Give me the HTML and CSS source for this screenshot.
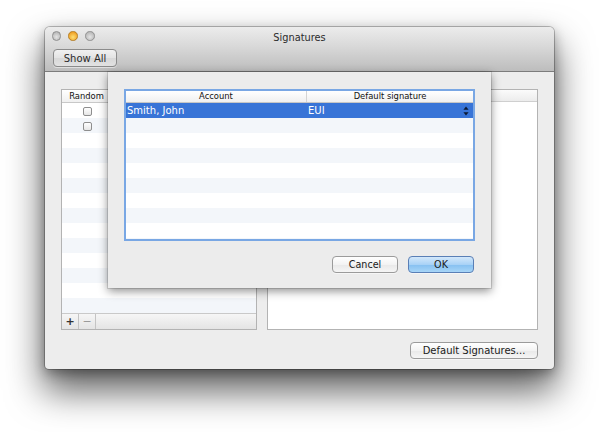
FILE: index.html
```html
<!DOCTYPE html>
<html>
<head>
<meta charset="utf-8">
<title>Signatures</title>
<link rel="stylesheet" href="styles.css">
</head>
<body>
<div class="window">
  <header class="titlebar">
    <div class="titlerow">
      <div class="lights">
        <span class="light"></span>
        <span class="light light-min"></span>
        <span class="light"></span>
      </div>
      <div class="title">Signatures</div>
      <div></div>
    </div>
    <div class="toolbar">
      <button class="btn btn-toolbar">Show All</button>
    </div>
  </header>
  <main class="content">
    <div class="panels">
      <div class="list">
        <div class="thead">
          <div class="th col-random">Random</div>
          <div class="th col-name"></div>
        </div>
        <div class="tbody">
          <div class="tr"><div class="td col-random"><span class="check"></span></div></div>
          <div class="tr"><div class="td col-random"><span class="check"></span></div></div>
          <div class="tr"></div>
          <div class="tr"></div>
          <div class="tr"></div>
          <div class="tr"></div>
          <div class="tr"></div>
          <div class="tr"></div>
          <div class="tr"></div>
          <div class="tr"></div>
          <div class="tr"></div>
          <div class="tr"></div>
          <div class="tr"></div>
          <div class="tr"></div>
        </div>
        <div class="list-bar">
          <button class="bar-btn bar-add">+</button>
          <button class="bar-btn bar-remove">−</button>
        </div>
      </div>
      <div class="editor">
        <div class="editor-head"></div>
      </div>
    </div>
    <div class="footer">
      <button class="btn btn-defaults">Default Signatures...</button>
    </div>

    <div class="sheet">
      <div class="grid">
        <div class="grid-head">
          <div class="gh gh-account">Account</div>
          <div class="gh gh-sig">Default signature</div>
        </div>
        <div class="grid-body">
          <div class="grow selected">
            <div class="gc gc-account">Smith, John</div>
            <div class="gc gc-sig">
              <span>EUI</span>
              <svg class="stepper" width="6" height="10" viewBox="0 0 6 10"><path d="M3 0.5 L5.6 3.8 L0.4 3.8 Z" fill="#0d1a33"/><path d="M3 9.5 L5.6 6.2 L0.4 6.2 Z" fill="#0d1a33"/></svg>
            </div>
          </div>
          <div class="grow"></div>
          <div class="grow"></div>
          <div class="grow"></div>
          <div class="grow"></div>
          <div class="grow"></div>
          <div class="grow"></div>
          <div class="grow"></div>
          <div class="grow"></div>
          <div class="grow"></div>
        </div>
      </div>
      <div class="sheet-buttons">
        <button class="btn btn-sheet">Cancel</button>
        <button class="btn btn-sheet btn-default">OK</button>
      </div>
    </div>
  </main>
</div>
</body>
</html>
```

FILE: styles.css
```css
* {
  box-sizing: border-box;
}

html, body {
  margin: 0;
  padding: 0;
  background: #ffffff;
}

html {
  height: 432px;
}

body {
  height: 432px;
  font-family: "DejaVu Sans", "Liberation Sans", sans-serif;
  font-size: 10px;
  color: #1a1a1a;
  padding-top: 27px;
  overflow: hidden;
}

.window {
  margin-left: 45px;
  width: 509px;
  height: 342px;
  border-radius: 5px 5px 4px 4px;
  box-shadow: 0 0 0 1px rgba(0, 0, 0, 0.24), 0 4px 12px rgba(0, 0, 0, 0.3), 0 20px 36px 2px rgba(0, 0, 0, 0.62);
  display: flex;
  flex-direction: column;
  background: #ededed;
}

/* title bar + toolbar */
.titlebar {
  height: 45px;
  border-radius: 5px 5px 0 0;
  background: linear-gradient(#ececec, #d8d8d8 45%, #bdbdbd);
  border-bottom: 1px solid #7c7c7c;
  display: flex;
  flex-direction: column;
}

.titlerow {
  height: 18px;
  display: grid;
  grid-template-columns: 1fr auto 1fr;
  align-items: center;
}

.lights {
  display: flex;
  gap: 7.4px;
  padding-left: 6.5px;
}

.light {
  width: 9.5px;
  height: 9.5px;
  border-radius: 50%;
  background: radial-gradient(circle at 50% 62%, #e4e4e4, #b9b9b9 75%);
  border: 1px solid #8f8f8f;
}

.light-min {
  background: radial-gradient(circle at 50% 65%, #fddf74, #f0a126 75%);
  border-color: #b67d1e;
}

.title {
  font-size: 9.8px;
  color: #2b2b2b;
  padding-top: 2px;
}

.toolbar {
  padding: 4px 8px 0;
}

/* buttons */
.btn {
  font-family: inherit;
  font-size: 10px;
  color: #1a1a1a;
  height: 17px;
  padding: 0;
  border: 1px solid #9b9b9b;
  border-radius: 4px;
  background: linear-gradient(#ffffff, #f3f3f3 50%, #e9e9e9 52%, #f5f5f5);
  box-shadow: 0 1px 0 rgba(255, 255, 255, 0.5);
  line-height: 15px;
}

.btn-toolbar {
  width: 64px;
  height: 18px;
  background: linear-gradient(#f1f1f1, #e3e3e3 50%, #d8d8d8 52%, #e2e2e2);
  border-color: #8b8b8b;
  color: #2a2a2a;
}

.btn-defaults {
  width: 128px;
}

.btn-sheet {
  width: 66px;
  font-size: 9.6px;
}

.btn-default {
  background: linear-gradient(#d3e8fb, #a9d2f6 50%, #86c0f1 52%, #a7d5f7);
  border-color: #5a7fb6;
}

/* content */
.content {
  position: relative;
  flex: 1;
  padding: 17px 16px 0;
  display: flex;
  flex-direction: column;
}

.panels {
  height: 241px;
  display: flex;
  gap: 10px;
}

.list {
  width: 196px;
  border: 1px solid #b3b3b3;
  background: #ffffff;
  display: flex;
  flex-direction: column;
}

.thead {
  height: 13px;
  display: flex;
  border-bottom: 1px solid #c8c8c8;
  background: linear-gradient(#ffffff, #f0f0f0);
}

.th {
  font-size: 8.4px;
  line-height: 12px;
  color: #111111;
}

.col-random {
  width: 50px;
  text-align: center;
  flex: none;
}

.th.col-random {
  border-right: 1px solid #d6d6d6;
}

.col-name {
  padding-left: 3px;
}

.tbody {
  flex: 1;
  overflow: hidden;
}

.tr {
  height: 15px;
  display: flex;
  align-items: center;
}

.tr:nth-child(even) {
  background: #f3f6fa;
}

.td.col-random {
  display: flex;
  justify-content: center;
}

.check {
  display: block;
  width: 9px;
  height: 9px;
  margin-top: 1px;
  border: 1px solid #8e8e8e;
  border-radius: 2px;
  background: linear-gradient(#ffffff, #e6e6e6);
}

.list-bar {
  height: 16px;
  border-top: 1px solid #c9c9c9;
  background: linear-gradient(#f6f6f6, #e4e4e4);
  display: flex;
}

.bar-btn {
  width: 17px;
  height: 15px;
  padding: 0;
  border: 0;
  border-right: 1px solid #c4c4c4;
  background: transparent;
  font-family: inherit;
  font-size: 11px;
  font-weight: bold;
  line-height: 14px;
  color: #333333;
}

.bar-remove {
  color: #9a9a9a;
  font-weight: normal;
}

.editor {
  flex: 1;
  border: 1px solid #b3b3b3;
  background: #ffffff;
}

.editor-head {
  height: 12px;
  border-bottom: 1px solid #cfcfcf;
  background: linear-gradient(#fbfbfb, #ececec);
}

.footer {
  margin-top: 12px;
  display: flex;
  justify-content: flex-end;
}

/* sheet */
.sheet {
  position: absolute;
  top: 0;
  left: 63px;
  width: 383px;
  height: 216px;
  padding: 17px 16px 0;
  background: #ececec;
  box-shadow: 0 0 0 1px rgba(0, 0, 0, 0.12), 0 3px 9px rgba(0, 0, 0, 0.45);
}

.grid {
  height: 152px;
  border: 2px solid #79a7e4;
  background: #ffffff;
  display: flex;
  flex-direction: column;
  overflow: hidden;
}

.grid-head {
  height: 12px;
  flex: none;
  display: flex;
  border-bottom: 1px solid #c6c6c6;
  background: linear-gradient(#ffffff, #f0f0f0);
}

.gh {
  font-size: 8.4px;
  line-height: 11px;
  text-align: center;
  color: #111111;
}

.gh-account {
  width: 180px;
}

.gh-sig {
  flex: 1;
  border-left: 1px solid #d4d4d4;
}

.grid-body {
  flex: 1;
  overflow: hidden;
}

.grow {
  height: 15px;
  display: flex;
  align-items: center;
}

.grow:nth-child(even) {
  background: #f3f6fa;
}

.grow.selected {
  background: #3874d7;
  color: #ffffff;
}

.gc-account {
  width: 180px;
  padding-left: 1px;
}

.gc-sig {
  flex: 1;
  display: flex;
  justify-content: space-between;
  align-items: center;
  padding-left: 2px;
  padding-right: 4px;
}

.stepper {
  display: block;
}

.sheet-buttons {
  margin-top: 15px;
  margin-right: 1px;
  display: flex;
  justify-content: flex-end;
  gap: 10px;
}
```
